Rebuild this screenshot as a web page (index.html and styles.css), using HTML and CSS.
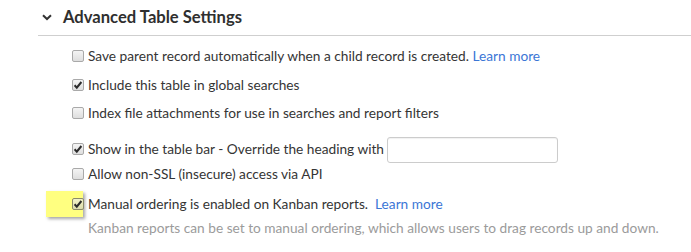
FILE: index.html
```html
<!DOCTYPE html>
<html>
<head>
<meta charset="utf-8">
<link rel="stylesheet" href="styles.css">
</head>
<body>
<section class="settings">
  <header class="section-head">
    <svg class="chevron" width="10" height="7" viewBox="0 0 10 7"><path d="M1 1.2 L5 5 L9 1.2" fill="none" stroke="#333" stroke-width="2"/></svg>
    <h2 class="title">Advanced Table Settings</h2>
  </header>
  <div class="body">
    <div class="row r1">
      <span class="cb"></span>
      <span class="label">Save parent record automatically when a child record is created. <a class="link" href="#">Learn more</a></span>
    </div>
    <div class="row r2">
      <span class="cb checked"><svg viewBox="0 0 12 12" width="12" height="12"><path d="M2.6 6.2 L4.8 8.6 L9.4 3" fill="none" stroke="#2b2b2b" stroke-width="2"/></svg></span>
      <span class="label">Include this table in global searches</span>
    </div>
    <div class="row r3">
      <span class="cb"></span>
      <span class="label">Index file attachments for use in searches and report filters</span>
    </div>
    <div class="row r4">
      <span class="cb checked"><svg viewBox="0 0 12 12" width="12" height="12"><path d="M2.6 6.2 L4.8 8.6 L9.4 3" fill="none" stroke="#2b2b2b" stroke-width="2"/></svg></span>
      <span class="label">Show in the table bar - Override the heading with</span>
      <input class="text-input" type="text">
    </div>
    <div class="row r5">
      <span class="cb"></span>
      <span class="label">Allow non-SSL (insecure) access via API</span>
    </div>
    <div class="row r6">
      <span class="cb-wrap">
        <span class="highlight"></span>
        <span class="cb checked"><svg viewBox="0 0 12 12" width="12" height="12"><path d="M2.6 6.2 L4.8 8.6 L9.4 3" fill="none" stroke="#2b2b2b" stroke-width="2"/></svg></span>
      </span>
      <span class="label">Manual ordering is enabled on Kanban reports.&nbsp; <a class="link" href="#">Learn more</a></span>
    </div>
    <div class="desc">Kanban reports can be set to manual ordering, which allows users to drag records up and down.</div>
  </div>
</section>
</body>
</html>
```

FILE: styles.css
```css
html, body {
  margin: 0;
  padding: 0;
  background: #fff;
}
body {
  font-family: Lato, "Open Sans", Arial, sans-serif;
  color: #333;
  width: 691px;
  height: 252px;
  overflow: hidden;
}
.settings {
  padding-top: 6px;
}
.section-head {
  display: flex;
  align-items: center;
  height: 22px;
  padding-left: 42px;
}
.chevron {
  display: block;
  margin-right: 11px;
  margin-top: 1px;
}
.title {
  margin: 0;
  font-size: 16.6px;
  font-weight: 700;
  color: #2f2f2f;
  line-height: 21px;
}
.body {
  margin-left: 38px;
  margin-top: 7px;
  border-top: 1px solid #cfcfcf;
  padding-top: 10px;
  padding-left: 34px;
}
.row {
  display: flex;
  align-items: center;
  height: 20px;
  font-size: 13.7px;
  line-height: 20px;
  white-space: nowrap;
}
.r2 { margin-top: 9px; }
.r3 { margin-top: 8px; }
.r4 { margin-top: 16px; }
.r5 { margin-top: 5px; }
.r6 { margin-top: 10px; }
.cb {
  position: relative;
  display: block;
  box-sizing: border-box;
  width: 12px;
  height: 12px;
  border: 1px solid #a9a9a9;
  border-radius: 2px;
  background: linear-gradient(#f4f4f4, #dedede);
  margin-right: 4px;
  flex: none;
}
.cb svg {
  position: absolute;
  left: -1px;
  top: -1px;
}
.cb-wrap {
  position: relative;
  display: block;
  flex: none;
}
.highlight {
  position: absolute;
  left: -26px;
  top: -7px;
  width: 37px;
  height: 26px;
  background: #ffff80;
  box-shadow: 2px 2px 3px rgba(0, 0, 0, 0.35);
}
.r6 .cb {
  background: linear-gradient(#f2f2c8, #dcdcae);
  border-color: #8a8a6a;
}
.label {
  color: #353535;
}
.link {
  color: #3b76d6;
  text-decoration: none;
}
.text-input {
  box-sizing: border-box;
  width: 171px;
  height: 26px;
  margin: -3px 0 -3px 3px;
  border: 1px solid #cccccc;
  border-radius: 3px;
  box-shadow: inset 0 1px 1px rgba(0, 0, 0, 0.06);
  padding: 0 6px;
  font-family: inherit;
  font-size: 14px;
  position: relative;
  top: 1px;
}
.desc {
  margin-top: 4px;
  padding-left: 16px;
  font-size: 13.7px;
  line-height: 20px;
  color: #9b9b9b;
  white-space: nowrap;
}
```
